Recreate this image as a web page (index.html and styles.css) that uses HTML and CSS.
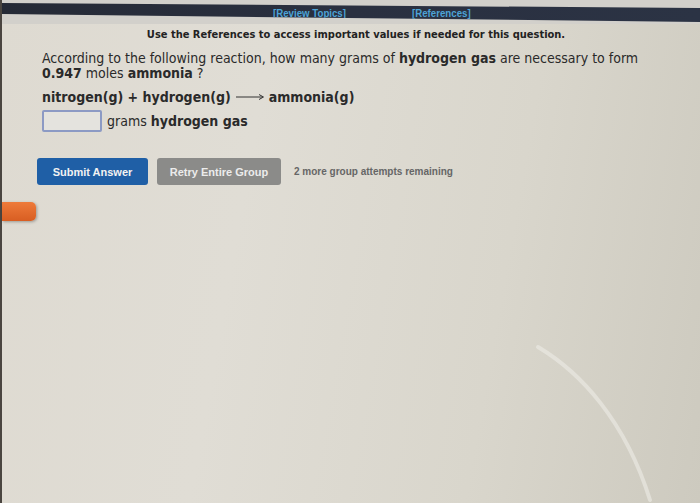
FILE: index.html
```html
<!DOCTYPE html>
<html>
<head>
<meta charset="utf-8">
<link rel="stylesheet" href="styles.css">
</head>
<body>
<div class="screen">
  <div class="topbar">
    <div class="bar">
      <a class="link review">[Review Topics]</a>
      <a class="link refs">[References]</a>
    </div>
  </div>
  <div class="notice">Use the References to access important values if needed for this question.</div>
  <div class="content">
    <p class="question">According to the following reaction, how many grams of <b>hydrogen gas</b> are necessary to form <b>0.947</b> moles <b>ammonia</b> ?</p>
    <p class="reaction"><b>nitrogen(g) + hydrogen(g)</b> <svg class="arrow" width="30" height="8" viewBox="0 0 30 8"><path d="M1 4 H27" stroke="#333" stroke-width="1"/><path d="M24 1.5 L28.5 4 L24 6.5" fill="none" stroke="#333" stroke-width="1"/></svg> <b>ammonia(g)</b></p>
    <div class="answer">
      <span class="inputbox"></span>
      <span class="unit">grams <b>hydrogen gas</b></span>
    </div>
    <div class="actions">
      <span class="btn submit">Submit Answer</span>
      <span class="btn retry">Retry Entire Group</span>
      <span class="remaining">2 more group attempts remaining</span>
    </div>
  </div>
  <div class="tab"></div>
  <svg class="glare" width="700" height="503" viewBox="0 0 700 503">
    <path d="M538 347 C 580 372, 625 420, 650 500" fill="none" stroke="#ebeae3" stroke-width="4" stroke-linecap="round" opacity="0.65"/>
  </svg>
</div>
</body>
</html>
```
FILE: styles.css
```css
html, body {
  margin: 0;
  padding: 0;
}
body {
  width: 700px;
  height: 503px;
  overflow: hidden;
  font-family: "DejaVu Sans Condensed", "DejaVu Sans", sans-serif;
  color: #2a2a2a;
}
.screen {
  position: relative;
  width: 700px;
  height: 503px;
  background: linear-gradient(100deg, #dedad1 0%, #e0ddd5 35%, #d9d6cc 70%, #cdcabf 100%);
  border-left: 2px solid #4a4540;
  box-sizing: border-box;
}
.topbar {
  height: 24px;
  background: #d2d0cb;
}
.bar {
  height: 24px;
  background: linear-gradient(90deg, #252a36 0%, #2a3040 50%, #2b3344 100%);
  clip-path: polygon(0 3px, 100% 8px, 100% 22px, 0 14px);
  display: flex;
  align-items: center;
  padding-top: 2px;
  box-sizing: border-box;
}
.link {
  font-family: "Liberation Sans", Arial, sans-serif;
  font-weight: bold;
  font-size: 11px;
  color: #4da3d6;
  transform: scaleX(0.88);
  transform-origin: left center;
}
.review {
  margin-left: 271px;
}
.refs {
  margin-left: 56px;
}
.notice {
  text-align: center;
  font-weight: bold;
  font-size: 11px;
  margin-top: 4px;
  color: #222;
  margin-left: 10px;
}
.content {
  padding-left: 40px;
  padding-top: 10px;
}
.question {
  margin: 0;
  width: 612px;
  font-size: 14px;
  line-height: 15px;
}
.reaction {
  margin: 8px 0 0 0;
  font-size: 14px;
  line-height: 16px;
}
.arrow {
  vertical-align: middle;
  margin-top: -2px;
}
.answer {
  display: flex;
  align-items: center;
  margin-top: 5px;
  gap: 5px;
}
.inputbox {
  width: 56px;
  height: 18px;
  border: 2px solid #8c9ac4;
  border-radius: 2px;
  background: #e4e3de;
}
.unit {
  font-size: 14px;
}
.actions {
  display: flex;
  align-items: center;
  margin-top: 26px;
  margin-left: -5px;
}
.btn {
  font-family: "Liberation Sans", Arial, sans-serif;
  font-weight: bold;
  font-size: 11px;
  color: #f2f2f2;
  height: 27px;
  display: flex;
  align-items: center;
  justify-content: center;
  border-radius: 3px;
}
.submit {
  width: 111px;
  background: #1f5fa6;
}
.retry {
  width: 124px;
  margin-left: 9px;
  background: #8b8b89;
  color: #ececec;
}
.remaining {
  font-family: "Liberation Sans", Arial, sans-serif;
  font-weight: bold;
  font-size: 10px;
  color: #666;
  margin-left: 13px;
}
.tab {
  width: 34px;
  height: 19px;
  margin-top: 17px;
  background: linear-gradient(180deg, #ee7a3a, #d85e22);
  border-radius: 0 5px 5px 0;
  box-shadow: 1px 1px 3px rgba(0,0,0,0.3);
}
.glare {
  position: absolute;
  left: -2px;
  top: 0;
  pointer-events: none;
}
```
